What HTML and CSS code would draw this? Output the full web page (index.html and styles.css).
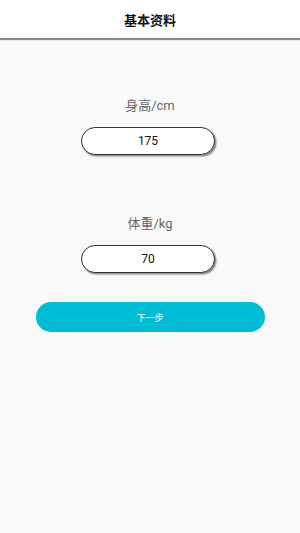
FILE: index.html
```html
<!DOCTYPE html>
<html lang="zh">
<head>
<meta charset="utf-8">
<link rel="stylesheet" href="styles.css">
</head>
<body>
<header class="topbar"><h1 class="title">基本资料</h1></header>
<main class="content">
  <section class="field">
    <div class="label">身高/cm</div>
    <div class="pill">175</div>
  </section>
  <section class="field field-second">
    <div class="label">体重/kg</div>
    <div class="pill">70</div>
  </section>
  <button class="next">下一步</button>
</main>
</body>
</html>
```
FILE: styles.css
```css
html, body {
  margin: 0;
  padding: 0;
  height: 100%;
}
body {
  background: #f9f9f9;
  font-family: Roboto, "Noto Sans CJK SC", sans-serif;
}
.topbar {
  height: 38px;
  background: #ffffff;
  border-bottom: 2px solid #8a8a8a;
  box-shadow: 0 1px 1px rgba(0,0,0,0.06);
  display: flex;
  align-items: center;
  justify-content: center;
}
.title {
  margin: 0;
  font-size: 13px;
  font-weight: bold;
  color: #111;
}
.content {
  display: flex;
  flex-direction: column;
  align-items: center;
  padding-top: 57px;
}
.field {
  display: flex;
  flex-direction: column;
  align-items: center;
}
.field-second {
  margin-top: 60px;
}
.label {
  font-size: 13px;
  color: #666;
  line-height: 18px;
}
.pill {
  margin-top: 12px;
  margin-right: 4px;
  width: 132px;
  height: 26px;
  border: 1px solid #333;
  border-radius: 14px;
  background: #fff;
  box-shadow: 1.5px 1.5px 1.5px rgba(0,0,0,0.45);
  display: flex;
  align-items: center;
  justify-content: center;
  font-size: 12px;
  color: #111;
}
.next {
  margin-top: 29px;
  width: 229px;
  height: 30px;
  border: none;
  border-radius: 15px;
  background: #00bcd4;
  color: #fff;
  font-family: Roboto, "Noto Sans CJK SC", sans-serif;
  font-size: 9px;
  padding: 0;
}
```
